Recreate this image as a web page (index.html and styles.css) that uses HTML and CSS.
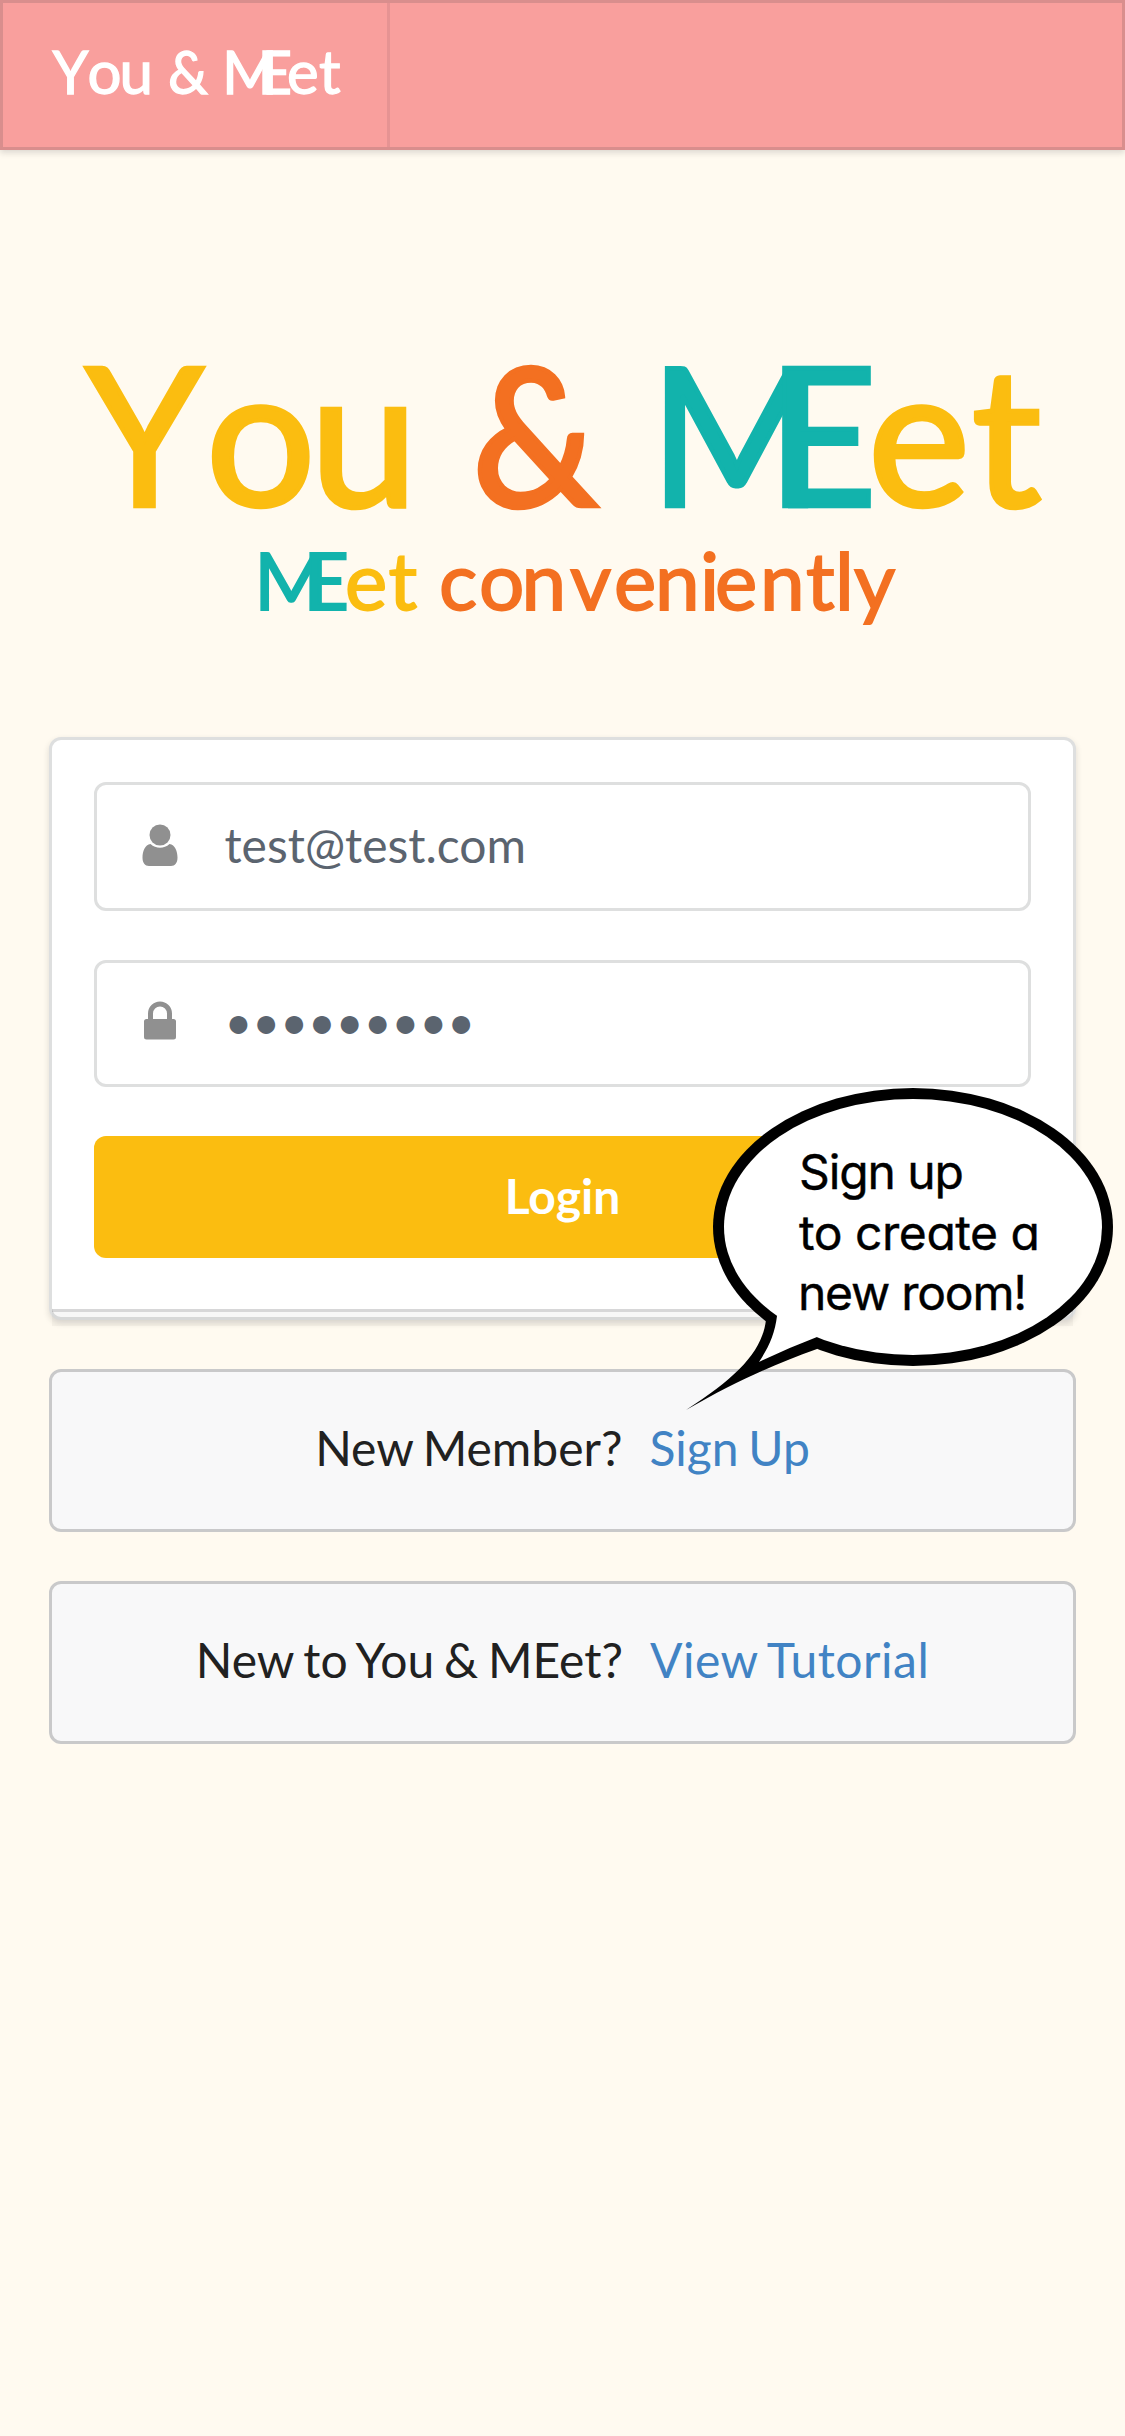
FILE: index.html
```html
<!DOCTYPE html>
<html lang="en">
<head>
<meta charset="utf-8">
<title>You &amp; MEet</title>
<link rel="stylesheet" href="styles.css">
</head>
<body>
<header class="menu">
  <a class="brand">
    <svg class="brand-logo" viewBox="0 0 384 144">
      <g class="wordmark">
        <text x="49.500" y="91" textLength="36" lengthAdjust="spacingAndGlyphs">Y</text>
        <text x="84.500 116.500" y="91">ou</text>
        <text x="165" y="91" textLength="40" lengthAdjust="spacingAndGlyphs">&amp;</text>
        <text x="219 254.500" y="91">ME</text>
        <text x="284 316" y="91">et</text>
      </g>
    </svg>
  </a>
</header>
<main class="page">
  <svg class="hero" viewBox="0 340 1125 300">
    <g class="title">
      <text class="yellow" x="86" y="505.500" textLength="117" lengthAdjust="spacingAndGlyphs">Y</text>
      <text class="yellow" x="206 310" y="505.500">ou</text>
      <text class="orange" x="472" y="505.500" textLength="126" lengthAdjust="spacingAndGlyphs">&amp;</text>
      <text class="teal" x="650" y="505.500" textLength="173" lengthAdjust="spacingAndGlyphs">M</text>
      <text class="teal" x="767" y="505.500" textLength="110" lengthAdjust="spacingAndGlyphs">E</text>
      <text class="yellow" x="868 972" y="505.500">et</text>
    </g>
    <g class="tagline">
      <text class="teal" x="254 303" y="610">ME</text>
      <text class="yellow" x="345 388.500" y="610">et</text>
      <text class="orange" x="439 479 521.500 570 614 655 700 715 760 806 835 854" y="610">conveniently</text>
    </g>
  </svg>
  <form class="card">
    <label class="field">
      <svg class="icon" viewBox="0 0 48 48"><circle cx="24" cy="14" r="10.500"/><path d="M14.500 23C9 23.500 6.500 30.500 6.500 36.500C6.500 42 9 45 13 45H35C39 45 41.500 42 41.500 36.500C41.500 30.500 39 23.500 33.500 23C28 28 20 28 14.500 23Z"/></svg>
      <span class="value">test@test.com</span>
    </label>
    <label class="field field-password">
      <svg class="icon" viewBox="0 0 48 48"><path fill-rule="evenodd" d="M12 22V16.500A12 12 0 0 1 36 16.500V22H37.500Q40 22 40 24.500V40Q40 42.500 37.500 42.500H10.500Q8 42.500 8 40V24.500Q8 22 10.500 22ZM17 22H31V16.500A7 7 0 0 0 17 16.500Z"/></svg>
      <span class="value">•••••••••</span>
    </label>
    <button class="login" type="button">Login</button>
  </form>
  <div class="message">New Member?<a class="link">Sign Up</a></div>
  <div class="message">New to You &amp; MEet?<a class="link link-tutorial">View Tutorial</a></div>
  <svg class="bubble" viewBox="680 1080 440 340">
    <ellipse cx="913" cy="1227" rx="200" ry="139"/>
    <path d="M766 1320C762 1352 737 1377 686 1410C735 1382 770 1366 817 1349V1330L790 1300Z"/>
    <ellipse class="bubble-fill" cx="913" cy="1227" rx="189" ry="128"/>
    <path class="bubble-fill" d="M777 1316C775 1333 769 1347 759 1362Q788 1348 817 1337L830 1320L800 1290Z"/>
    <text class="bubble-text" x="799" y="1189" textLength="165">Sign up</text>
    <text class="bubble-text" x="799" y="1249.500" textLength="241">to create a</text>
    <text class="bubble-text" x="798" y="1309.500" textLength="229">new room!</text>
  </svg>
</main>
</body>
</html>
```
FILE: styles.css
```css
* { box-sizing: border-box; }

body {
  margin: 0;
  min-height: 2436px;
  background: #fffaf0;
  font-family: Lato, "Liberation Sans", sans-serif;
  font-size: 48px;
  line-height: 58px;
  color: #212121;
}

.menu {
  display: flex;
  height: 150px;
  border: 3px solid #d98e8d;
  background: #f99f9d;
  box-shadow: 0 3px 6px rgba(34, 36, 38, .15);
}

.brand {
  width: 387px;
  border-right: 3px solid #e69393;
}

.brand-logo { display: block; width: 384px; height: 144px; }

.wordmark {
  font-size: 60px;
  fill: #fff;
  stroke: #fff;
  stroke-width: 1.300px;
}

.page {
  display: flex;
  flex-direction: column;
  padding: 190px 49px 0;
}

.hero {
  display: block;
  width: 1125px;
  height: 300px;
  margin: 0 -49px 97px;
  overflow: visible;
}

.title { font-size: 193px; stroke-width: 4.500px; }
.tagline { font-size: 80px; stroke-width: 1.800px; }
.yellow { fill: #fbbd10; stroke: #fbbd10; }
.orange { fill: #f37021; stroke: #f37021; }
.teal { fill: #12b3ac; stroke: #12b3ac; }

.card {
  position: relative;
  display: flex;
  flex-direction: column;
  gap: 49px;
  width: 1027px;
  height: 583px;
  padding: 42px;
  border: 3px solid #dedfdf;
  border-radius: 12px;
  background: #fff;
  box-shadow: 0 3px 6px rgba(34, 36, 38, .15);
}

.card::after {
  content: "";
  position: absolute;
  left: 0;
  bottom: -9px;
  width: 100%;
  height: 14px;
  border-top: 3px solid rgba(34, 36, 38, .15);
  background: rgba(0, 0, 0, .03);
}

.field {
  display: flex;
  align-items: center;
  gap: 41px;
  height: 129px;
  padding: 0 39px 3px;
  border: 3px solid #dedfdf;
  border-radius: 12px;
  color: #5b646f;
}

.field-password { height: 127px; padding-bottom: 6px; }

.icon { width: 48px; height: 48px; fill: #909090; }

.value { margin-left: -.5px; }

.login {
  height: 122px;
  padding: 0 0 3px;
  border: 0;
  border-radius: 12px;
  background: #fbbd10;
  color: #fff;
  font: bold 48px/58px Lato, sans-serif;
}

.message {
  width: 1027px;
  height: 163px;
  margin-top: 49px;
  padding-top: 47px;
  border: 3px solid #c9c9ca;
  border-radius: 12px;
  background: #f8f8f9;
  text-align: center;
  word-spacing: -2.500px;
}

.link { margin-left: 27px; color: #4183c4; }
.link-tutorial { letter-spacing: .5px; }

.bubble {
  position: absolute;
  left: 680px;
  top: 1080px;
  width: 440px;
  height: 340px;
}

.bubble-fill { fill: #fff; }

.bubble-text {
  font-family: Inter, sans-serif;
  font-size: 48px;
  font-feature-settings: "cv11";
  stroke: #000;
  stroke-width: .4px;
}
```
